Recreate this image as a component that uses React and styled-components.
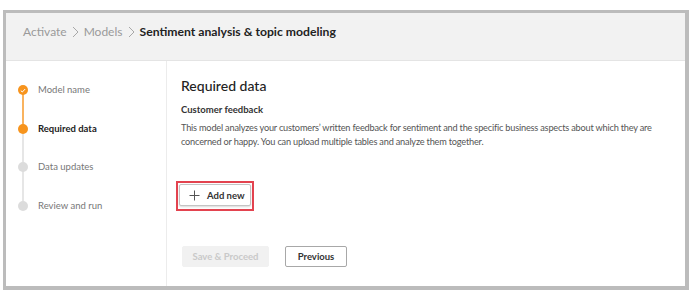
import React from "react";
import styled, { createGlobalStyle } from "styled-components";

const Global = createGlobalStyle`
  html, body { margin: 0; padding: 0; background: #fff; }
  body { font-family: Lato, "Noto Sans", sans-serif; }
  * { box-sizing: border-box; }
`;

const Page = styled.div`
  width: 693px;
  height: 298px;
  padding: 10px 4px 8px 3px;
  background: #fff;
`;

const Frame = styled.div`
  width: 686px;
  height: 280px;
  border: 3px solid #bcbcbc;
  border-right-width: 4px;
  border-bottom-width: 4px;
  display: flex;
  flex-direction: column;
  background: #fff;
`;

const Header = styled.div`
  height: 48px;
  background: #f2f2f2;
  border-bottom: 1px solid #e4e4e4;
  display: flex;
  align-items: flex-start;
  padding: 11px 0 0 17px;
  gap: 4px;
`;

const Crumb = styled.span`
  line-height: 16px;
  font-size: ${(p) => (p.$current ? "12.2px" : "12px")};
  color: ${(p) => (p.$current ? "#222" : "#9a9a9a")};
  font-weight: ${(p) => (p.$current ? 700 : 400)};
`;

const Sep = styled.svg`
  width: 7px;
  height: 12px;
  margin: 2px 1px 0;
`;

const Body = styled.div`
  flex: 1;
  display: flex;
`;

const Sidebar = styled.div`
  width: 161px;
  border-right: 1px solid #ececec;
  padding-top: 23px;
  padding-left: 12px;
`;

const Step = styled.div`
  position: relative;
  height: 38.5px;
  display: flex;
  align-items: flex-start;
  gap: 10px;
`;

const Dot = styled.div`
  position: relative;
  z-index: 1;
  width: 10px;
  height: 10px;
  border-radius: 50%;
  margin-top: 1px;
  background: ${(p) => (p.$state === "todo" ? "#dcdcdc" : "#f7941d")};
  display: flex;
  align-items: center;
  justify-content: center;
  flex-shrink: 0;
`;

const Line = styled.div`
  position: absolute;
  left: 4px;
  top: 8px;
  width: 2px;
  height: 38px;
  background: ${(p) => (p.$done ? "#f9b35f" : "#e6e6e6")};
`;

const StepLabel = styled.span`
  font-size: 9.5px;
  line-height: 12px;
  color: ${(p) => (p.$active ? "#222" : "#777")};
  font-weight: ${(p) => (p.$active ? 700 : 400)};
`;

const Main = styled.div`
  flex: 1;
  padding: 16px 14px 0 14px;
  display: flex;
  flex-direction: column;
`;

const Title = styled.h2`
  margin: 0;
  font-size: 14px;
  font-weight: 500;
  color: #222;
  line-height: 18px;
`;

const Subtitle = styled.div`
  margin-top: 9px;
  font-size: 9.5px;
  font-weight: 700;
  color: #333;
  line-height: 12px;
`;

const Desc = styled.p`
  margin: 5px 0 0;
  font-size: 9.2px;
  letter-spacing: -0.2px;
  color: #555;
  line-height: 14px;
  max-width: 480px;
`;

const Highlight = styled.div`
  margin-top: 32px;
  margin-left: -5px;
  width: 78px;
  height: 30px;
  border: 2px solid #e3434f;
  padding: 1px;
  display: flex;
`;

const AddButton = styled.button`
  width: 72px;
  height: 22px;
  border: 1px solid #c4c4c4;
  border-radius: 2px;
  background: #fff;
  box-shadow: 0 1px 2px rgba(0, 0, 0, 0.15);
  display: flex;
  align-items: center;
  gap: 7px;
  padding: 0 0 0 9px;
  font-family: inherit;
  font-size: 9.5px;
  font-weight: 700;
  color: #333;
`;

const Actions = styled.div`
  margin-top: 35px;
  margin-left: 1px;
  display: flex;
  gap: 16px;
`;

const ActionButton = styled.button`
  height: 21px;
  width: ${(p) => p.$w}px;
  font-family: inherit;
  font-size: 9.5px;
  font-weight: 700;
  border-radius: 2px;
  padding: 0;
  background: ${(p) => (p.$disabled ? "#f1f1f1" : "#fff")};
  color: ${(p) => (p.$disabled ? "#c9c9c9" : "#333")};
  border: 1px solid ${(p) => (p.$disabled ? "#f1f1f1" : "#a8a8a8")};
`;

const Chevron = () => (
  <Sep viewBox="0 0 7 12">
    <path d="M1 1 L6 6 L1 11" fill="none" stroke="#a8a8a8" strokeWidth="1" />
  </Sep>
);

const steps = [
  { label: "Model name", state: "done" },
  { label: "Required data", state: "active" },
  { label: "Data updates", state: "todo" },
  { label: "Review and run", state: "todo" },
];

export default function App() {
  return (
    <>
      <Global />
      <Page>
        <Frame>
          <Header>
            <Crumb>Activate</Crumb>
            <Chevron />
            <Crumb>Models</Crumb>
            <Chevron />
            <Crumb $current>Sentiment analysis &amp; topic modeling</Crumb>
          </Header>
          <Body>
            <Sidebar>
              {steps.map((s, i) => (
                <Step key={s.label}>
                  {i < steps.length - 1 && <Line $done={s.state === "done"} />}
                  <Dot $state={s.state}>
                    {s.state === "done" && (
                      <svg width="6" height="5" viewBox="0 0 6 5">
                        <path d="M0.8 2.6 L2.3 4 L5.2 1" fill="none" stroke="#fff" strokeWidth="1" />
                      </svg>
                    )}
                  </Dot>
                  <StepLabel $active={s.state === "active"}>{s.label}</StepLabel>
                </Step>
              ))}
            </Sidebar>
            <Main>
              <Title>Required data</Title>
              <Subtitle>Customer feedback</Subtitle>
              <Desc>
                This model analyzes your customers’ written feedback for sentiment and the specific business aspects about which they are concerned or happy. You can upload multiple tables and analyze them together.
              </Desc>
              <Highlight>
                <AddButton>
                  <svg width="11" height="11" viewBox="0 0 11 11">
                    <path d="M5.5 0.5 V10.5 M0.5 5.5 H10.5" stroke="#555" strokeWidth="1" />
                  </svg>
                  Add new
                </AddButton>
              </Highlight>
              <Actions>
                <ActionButton $disabled $w={87}>Save &amp; Proceed</ActionButton>
                <ActionButton $w={62}>Previous</ActionButton>
              </Actions>
            </Main>
          </Body>
        </Frame>
      </Page>
    </>
  );
}
